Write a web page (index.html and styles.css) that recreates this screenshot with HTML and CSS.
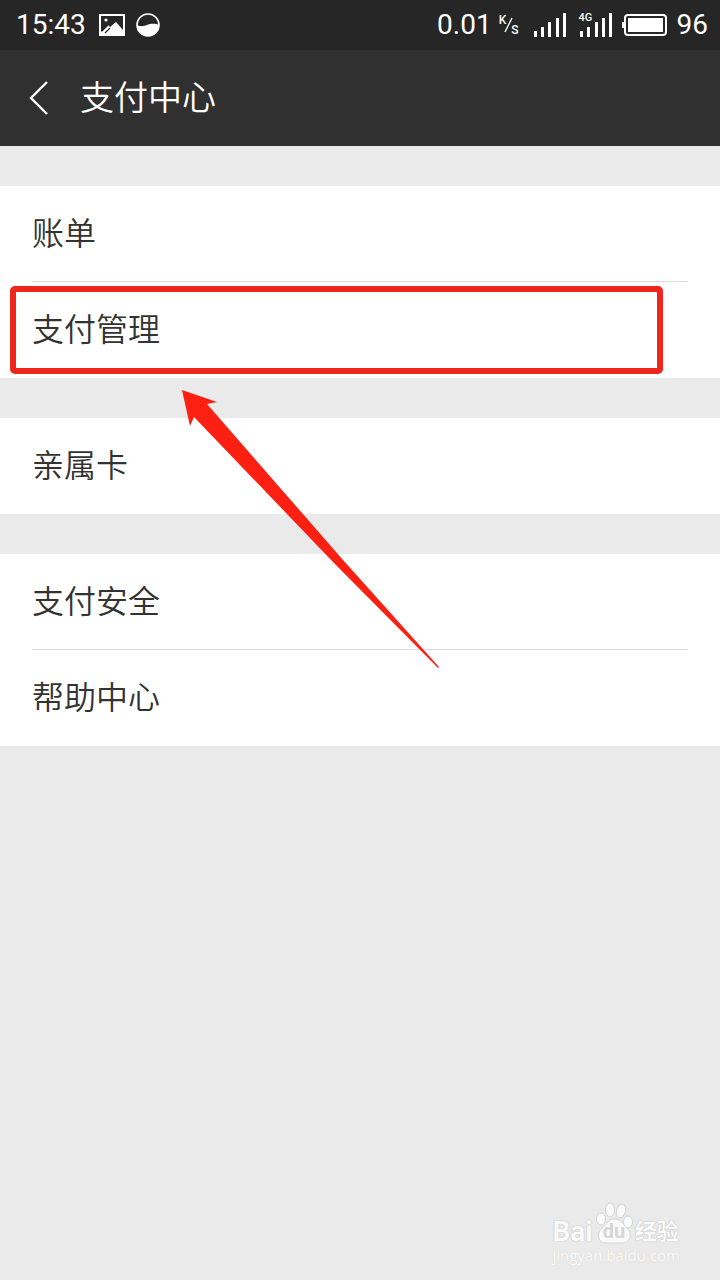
FILE: index.html
```html
<!DOCTYPE html>
<html lang="zh-CN">
<head>
    <meta charset="UTF-8">
    <meta name="viewport" content="width=device-width, initial-scale=1">
    <title>支付中心</title>
    <link rel="stylesheet" href="styles.css">
</head>
<body>
    <div class="status-bar">
        <div class="status-left">
            <span class="clock">15:43</span>
            <svg class="icon-picture" width="26" height="22" viewBox="0 0 26 22">
                <path fill="#fff" fill-rule="evenodd" d="M0 0h26v22H0zM2 2v16l7-7 2 2 6-5 7 8V2z"/>
                <circle cx="7" cy="6" r="1.6" fill="#fff"/>
                <path d="M3 17l6-6M6 19l5-5" stroke="#262626" stroke-width="1.2"/>
            </svg>
            <svg class="icon-wave" width="24" height="24" viewBox="0 0 24 24">
                <circle cx="12" cy="12" r="11" fill="none" stroke="#fff" stroke-width="1.6"/>
                <path fill="#fff" d="M1 12c4 2 7 1 10 0s7-2 12 0a11 11 0 0 1-22 0z"/>
            </svg>
        </div>
        <div class="status-right">
            <span>0.01</span>
            <span class="unit"><span>K</span><svg width="10" height="16" viewBox="0 0 10 16"><path d="M1 15L8 1" stroke="#fff" stroke-width="1.4"/></svg><span class="unit-s">S</span></span>
            <svg class="signal" width="34" height="26" viewBox="0 0 34 26">
                <path fill="#fff" d="M1 19h3v6H1zM8 15h3v10H8zM15 10h3v15h-3zM23 6h3v19h-3zM30 1h3v24h-3z"/>
            </svg>
            <span class="network">
                <span class="network-type">4G</span>
                <svg width="34" height="26" viewBox="0 0 34 26">
                    <path fill="#fff" d="M1 19h3v6H1zM8 15h3v10H8zM16 10h3v15h-3zM23 6h3v19h-3zM30 1h3v24h-3z"/>
                </svg>
            </span>
            <svg class="battery" width="46" height="24" viewBox="0 0 46 24">
                <rect x="3" y="2" width="41" height="20" rx="3" fill="none" stroke="#fff" stroke-width="2"/>
                <rect x="6" y="5" width="35" height="14" fill="#fff"/>
                <path fill="#fff" d="M0 9h2v6H0z"/>
            </svg>
            <span class="level">96</span>
        </div>
    </div>

    <header>
        <button type="button" class="btn-back" aria-label="返回">
            <svg width="20" height="34" viewBox="0 0 20 34">
                <path d="M19 1L3 17l16 16" fill="none" stroke="#fff" stroke-width="2.4"/>
            </svg>
        </button>
        <h1>支付中心</h1>
    </header>

    <main>
        <nav class="group">
            <a class="row" href="#bill">账单</a>
            <div class="marked">
                <a class="row" href="#manage">支付管理</a>
                <div class="mark-box"></div>
                <svg class="mark-arrow" width="258" height="280" viewBox="0 0 258 280">
                    <path fill="#fb2012" d="M0 0L35 12L25 14L161 170L257 277L256 278L151 172L12 27L8 36Z"/>
                </svg>
            </div>
        </nav>
        <nav class="group">
            <a class="row" href="#family">亲属卡</a>
        </nav>
        <nav class="group">
            <a class="row" href="#safety">支付安全</a>
            <a class="row" href="#help">帮助中心</a>
        </nav>
    </main>

    <div class="watermark">
        <div class="brand">
            <span class="bai">Bai</span>
            <span class="paw">
                <svg width="40" height="42" viewBox="0 0 40 42">
                    <g fill="#fafafa" stroke="#d4d4d4">
                        <ellipse cx="6" cy="17" rx="4.5" ry="6"/>
                        <ellipse cx="15" cy="8" rx="4.5" ry="7"/>
                        <ellipse cx="26" cy="9" rx="4.5" ry="7" transform="rotate(15 26 9)"/>
                        <ellipse cx="33" cy="20" rx="4.5" ry="6"/>
                        <path d="M20 17c6 0 8 5 12 9 6 6 3 15-4 15H11c-8 0-10-9-4-15 5-4 6-9 13-9z"/>
                    </g>
                </svg>
                <span class="du">du</span>
            </span>
            <span class="jingyan">经验</span>
        </div>
        <div class="site">jingyan.baidu.com</div>
    </div>
</body>
</html>
```
FILE: styles.css
```css
* {
    box-sizing: border-box;
}

body {
    margin: 0;
    min-height: 100vh;
    position: relative;
    background-color: #eaeaea;
    color: #333;
    font-family: Roboto, "Noto Sans CJK SC", sans-serif;
}

svg {
    display: block;
    flex: none;
}

.status-bar {
    display: flex;
    justify-content: space-between;
    align-items: center;
    height: 50px;
    padding: 0 12px 0 16px;
    background-color: #262626;
    color: #fff;
    font-size: 28px;
    font-weight: 400;
    line-height: 48px;
}

.status-left,
.status-right {
    display: flex;
    align-items: center;
}

.clock {
    margin-right: 13px;
}

.icon-picture {
    margin-right: 11px;
}

.unit {
    display: flex;
    align-items: center;
    margin: 0 14px 0 7px;
    font-size: 12px;
    font-weight: 500;
    line-height: 12px;
}

.unit > span {
    margin: 0 -2px 10px 0;
}

.unit > .unit-s {
    margin: 10px 0 0 -3px;
}

.signal {
    margin-right: 12px;
}

.network {
    position: relative;
    margin-right: 9px;
}

.network-type {
    position: absolute;
    top: 1px;
    left: 0;
    font-size: 11px;
    font-weight: 500;
    line-height: 10px;
}

.battery {
    margin-right: 9px;
}

header {
    display: flex;
    align-items: center;
    height: 96px;
    padding-left: 20px;
    background-color: #303030;
    color: #fff;
}

.btn-back {
    width: 60px;
    height: 96px;
    padding: 0 8px;
    border: none;
    background: none;
    cursor: pointer;
}

h1 {
    margin: 0;
    font-size: 34px;
    font-weight: 350;
    line-height: 94px;
}

.group {
    margin-top: 40px;
    background-color: #fff;
}

.row {
    display: block;
    height: 96px;
    padding: 0 32px;
    color: #333;
    font-size: 32px;
    font-weight: 350;
    line-height: 96px;
    text-decoration: none;
}

.group > .row:first-child:not(:last-child) {
    margin: 0 32px;
    padding: 0;
    border-bottom: 1px solid #dadada;
}

.marked {
    position: relative;
}

.mark-box {
    position: absolute;
    top: 4px;
    right: 57px;
    bottom: 4px;
    left: 10px;
    border: 6px solid #ee261c;
    border-radius: 5px;
    pointer-events: none;
}

.mark-arrow {
    position: absolute;
    top: 108px;
    left: 182px;
    z-index: 1;
    pointer-events: none;
}

.watermark {
    position: absolute;
    right: 40px;
    bottom: 16px;
    color: #fafafa;
    text-shadow: 0 0 1px #bbb, 0 0 1px #bbb;
}

.brand {
    display: flex;
    align-items: flex-end;
    height: 42px;
    margin-bottom: 2px;
    line-height: 24px;
}

.bai {
    font-size: 28px;
    font-weight: 700;
}

.paw {
    position: relative;
    margin-left: 2px;
}

.du {
    position: absolute;
    top: 17px;
    left: 8px;
    color: #d6d6d6;
    font-size: 20px;
    font-weight: 700;
    line-height: 24px;
    text-shadow: none;
}

.jingyan {
    font-size: 22px;
    font-weight: 700;
}

.site {
    font-family: "Open Sans", sans-serif;
    font-size: 15px;
    line-height: 18px;
    text-shadow: 0 0 1px #ccc;
}
```
